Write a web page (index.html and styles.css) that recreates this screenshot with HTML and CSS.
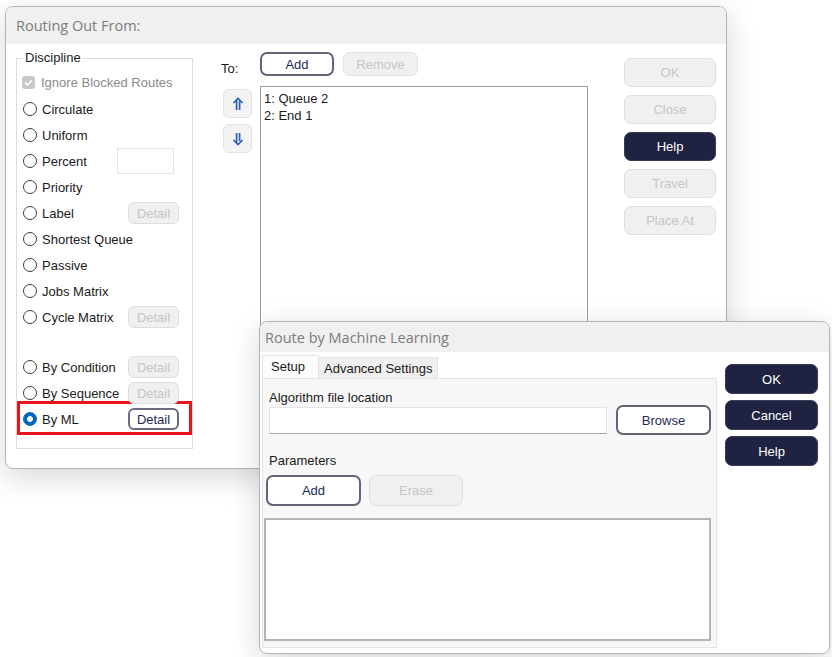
FILE: index.html
```html
<!DOCTYPE html>
<html>
<head>
  <title>Routing Out From</title>
  <meta charset="utf-8">
  <link rel="stylesheet" href="styles.css">
</head>
<body>
  <div class="desktop">
    <div class="win routing">
      <div class="titlebar">Routing Out From:</div>
      <div class="winbody">
        <fieldset class="discipline">
          <legend>Discipline</legend>
          <div class="row check-row">
            <span class="check"><svg width="13" height="13" viewBox="0 0 13 13"><path d="M3 6.6 L5.4 9 L10 4.2" fill="none" stroke="#fff" stroke-width="1.6"/></svg></span>
            <span class="lbl muted">Ignore Blocked Routes</span>
          </div>
          <div class="row"><span class="radio"></span><span class="lbl">Circulate</span></div>
          <div class="row"><span class="radio"></span><span class="lbl">Uniform</span></div>
          <div class="row"><span class="radio"></span><span class="lbl">Percent</span><span class="pct"></span></div>
          <div class="row"><span class="radio"></span><span class="lbl">Priority</span></div>
          <div class="row"><span class="radio"></span><span class="lbl">Label</span><button class="detail">Detail</button></div>
          <div class="row"><span class="radio"></span><span class="lbl">Shortest Queue</span></div>
          <div class="row"><span class="radio"></span><span class="lbl">Passive</span></div>
          <div class="row"><span class="radio"></span><span class="lbl">Jobs Matrix</span></div>
          <div class="row"><span class="radio"></span><span class="lbl">Cycle Matrix</span><button class="detail">Detail</button></div>
          <div class="spacer"></div>
          <div class="row"><span class="radio"></span><span class="lbl">By Condition</span><button class="detail">Detail</button></div>
          <div class="row"><span class="radio"></span><span class="lbl">By Sequence</span><button class="detail">Detail</button></div>
          <div class="highlight">
            <div class="row"><span class="radio on"></span><span class="lbl">By ML</span><button class="detail active">Detail</button></div>
          </div>
        </fieldset>

        <div class="targets">
          <span class="to">To:</span>
          <div class="toprow">
            <button class="btn outline">Add</button>
            <button class="btn off">Remove</button>
          </div>
          <div class="arrows">
            <button class="arrow">
              <svg width="14" height="16" viewBox="0 0 14 16"><path d="M2.5 7 L7 2.5 L11.5 7 M5.6 3.5 V14 M8.6 6 C8.6 5.6 9 5.4 9.6 5.6 M8.6 6 V14" fill="none" stroke="#2a5fc0" stroke-width="1.7"/></svg>
            </button>
            <button class="arrow">
              <svg width="14" height="16" viewBox="0 0 14 16"><path d="M2.5 9 L7 13.5 L11.5 9 M5.6 2 V12.5 M8.6 2 V10" fill="none" stroke="#2a5fc0" stroke-width="1.7"/></svg>
            </button>
          </div>
          <div class="listbox">
            <div>1: Queue 2</div>
            <div>2: End 1</div>
          </div>
        </div>

        <div class="actions">
          <button class="btn off">OK</button>
          <button class="btn off">Close</button>
          <button class="btn dark">Help</button>
          <button class="btn off">Travel</button>
          <button class="btn off">Place At</button>
        </div>
      </div>
    </div>

    <div class="win ml">
      <div class="titlebar">Route by Machine Learning</div>
      <div class="winbody">
        <div class="tabs-col">
          <div class="tabstrip">
            <div class="tab sel">Setup</div>
            <div class="tab">Advanced Settings</div>
          </div>
          <div class="panel">
            <div class="field-label">Algorithm file location</div>
            <div class="file-row">
              <span class="textbox"></span>
              <button class="btn outline wide">Browse</button>
            </div>
            <div class="field-label params">Parameters</div>
            <div class="param-btns">
              <button class="btn outline wide">Add</button>
              <button class="btn off erase">Erase</button>
            </div>
            <div class="param-list"></div>
          </div>
        </div>
        <div class="side">
          <button class="btn dark">OK</button>
          <button class="btn dark">Cancel</button>
          <button class="btn dark">Help</button>
        </div>
      </div>
    </div>
  </div>
</body>
</html>
```

FILE: styles.css
```css
* {
  box-sizing: border-box;
}

body {
  margin: 0;
  background: #fff;
  font-family: "Liberation Sans", Arial, sans-serif;
  font-size: 13px;
  color: #1a1a1a;
}

.desktop {
  position: relative;
  width: 832px;
  height: 657px;
  overflow: hidden;
}

/* windows sit on a free canvas */
.win {
  position: absolute;
  display: flex;
  flex-direction: column;
  background: #fff;
  border: 1px solid #b4b4b4;
  border-radius: 8px;
  box-shadow: 0 8px 30px rgba(0, 0, 0, 0.16);
  overflow: hidden;
}

.routing {
  left: 5px;
  top: 6px;
  width: 722px;
  height: 463px;
}

.ml {
  left: 259px;
  top: 321px;
  width: 571px;
  height: 333px;
}

.titlebar {
  display: flex;
  align-items: center;
  flex: none;
  background: #f0f0f0;
  font-family: "Open Sans", sans-serif;
  font-size: 14.5px;
  color: #7c7c7c;
}

.routing .titlebar {
  height: 37px;
  padding-left: 10px;
}

.ml .titlebar {
  height: 30px;
  padding-left: 5px;
}

button {
  font: inherit;
  padding: 0;
  margin: 0;
}

.btn {
  border-radius: 7px;
}

.outline {
  background: #fff;
  border: 2px solid #62657a;
  color: #1f2a55;
}

.off {
  background: #f0f0f0;
  border: 1px solid #e0e0e0;
  color: #c6c6c6;
}

.dark {
  background: #1f2240;
  border: 1px solid #3a3d56;
  color: #fff;
}

/* main window */
.routing .winbody {
  display: flex;
  align-items: flex-start;
  padding-left: 10px;
}

.discipline {
  width: 177px;
  margin: 6px 0 0 0;
  padding: 2px 13px 13px 6px;
  border: 1px solid #dcdcdc;
  min-width: 0;
}

.discipline legend {
  padding: 0 2px;
  line-height: 16px;
}

.row {
  display: flex;
  align-items: center;
  height: 26px;
}

.check-row {
  height: 28px;
}

.check {
  width: 13px;
  height: 13px;
  margin: 0 6px 0 -1px;
  border-radius: 3px;
  background: #c8c8c8;
  display: flex;
}

.radio {
  flex: none;
  width: 14px;
  height: 14px;
  margin-right: 5px;
  border: 1px solid #3c3c3c;
  border-radius: 50%;
  background: #fff;
}

.radio.on {
  border-color: #0067c0;
  background: radial-gradient(circle, #fff 0 2.6px, #0067c0 3.2px);
}

.lbl {
  flex: 1;
  white-space: nowrap;
}

.muted {
  color: #8a8a8a;
}

.pct {
  width: 57px;
  height: 26px;
  margin-right: 5px;
  border: 1px solid #e3e3e3;
  background: #fff;
}

.detail {
  width: 51px;
  height: 22px;
  border-radius: 6px;
  border: 1px solid #dedede;
  background: #f0f0f0;
  color: #c6c6c6;
}

.detail.active {
  background: #fff;
  border: 2px solid #6a6d7e;
  color: #1f2a55;
}

.spacer {
  height: 24px;
}

.highlight {
  margin: -5px -13px 0 -6px;
  padding: 2px 10px 0 3px;
  border: 3px solid #e8141c;
}

.targets {
  display: grid;
  grid-template-columns: 39px 328px;
  grid-template-rows: 24px auto;
  row-gap: 10px;
  margin: 8px 0 0 28px;
}

.to {
  align-self: end;
  line-height: 14px;
}

.toprow {
  display: flex;
  gap: 9px;
}

.toprow .btn {
  height: 24px;
}

.toprow .outline {
  width: 74px;
}

.toprow .off {
  width: 75px;
}

.arrows {
  display: flex;
  flex-direction: column;
  gap: 6px;
  padding: 3px 0 0 2px;
}

.arrow {
  display: flex;
  align-items: center;
  justify-content: center;
  width: 29px;
  height: 29px;
  border-radius: 6px;
  border: 1px solid #e2e2e2;
  background: #f3f3f3;
}

.listbox {
  height: 260px;
  padding: 3px 0 0 3px;
  border: 1px solid #9a9da3;
  line-height: 17px;
  background: #fff;
}

.actions {
  display: flex;
  flex-direction: column;
  gap: 8px;
  margin: 14px 0 0 36px;
}

.actions .btn {
  width: 92px;
  height: 29px;
}

/* machine learning dialog */
.ml .winbody {
  display: flex;
  padding: 3px 0 0 2px;
}

.tabs-col {
  display: flex;
  flex-direction: column;
  width: 455px;
}

.tabstrip {
  display: flex;
  align-items: flex-end;
  height: 23px;
}

.tab {
  height: 21px;
  padding: 0 5px;
  line-height: 21px;
  border: 1px solid #e3e3e3;
  border-bottom: none;
  background: #f0f0f0;
}

.tab.sel {
  width: 57px;
  height: 23px;
  padding-left: 8px;
  line-height: 22px;
  background: #fcfcfc;
  margin-right: -1px;
}

.panel {
  display: flex;
  flex-direction: column;
  align-items: flex-start;
  height: 270px;
  border: 1px solid #e3e3e3;
  background: #f7f7f7;
}

.field-label {
  margin: 12px 0 0 6px;
  line-height: 14px;
}

.file-row {
  display: flex;
  align-items: center;
  gap: 9px;
  height: 30px;
  margin-left: 6px;
}

.textbox {
  width: 338px;
  height: 27px;
  border: 1px solid #e4e4e4;
  border-bottom-color: #a6a6a6;
  background: #fff;
}

.wide {
  width: 95px;
  height: 30px;
}

.field-label.params {
  margin-top: 19px;
}

.param-btns {
  display: flex;
  gap: 8px;
  margin: 7px 0 0 3px;
}

.param-btns .btn {
  height: 31px;
}

.erase {
  width: 94px;
}

.param-list {
  width: 447px;
  height: 123px;
  margin: 12px 0 0 1px;
  border: 2px solid #b2b4b9;
  background: #fff;
}

.side {
  display: flex;
  flex-direction: column;
  gap: 6px;
  margin: 9px 0 0 8px;
}

.side .btn {
  width: 93px;
  height: 30px;
}
```
